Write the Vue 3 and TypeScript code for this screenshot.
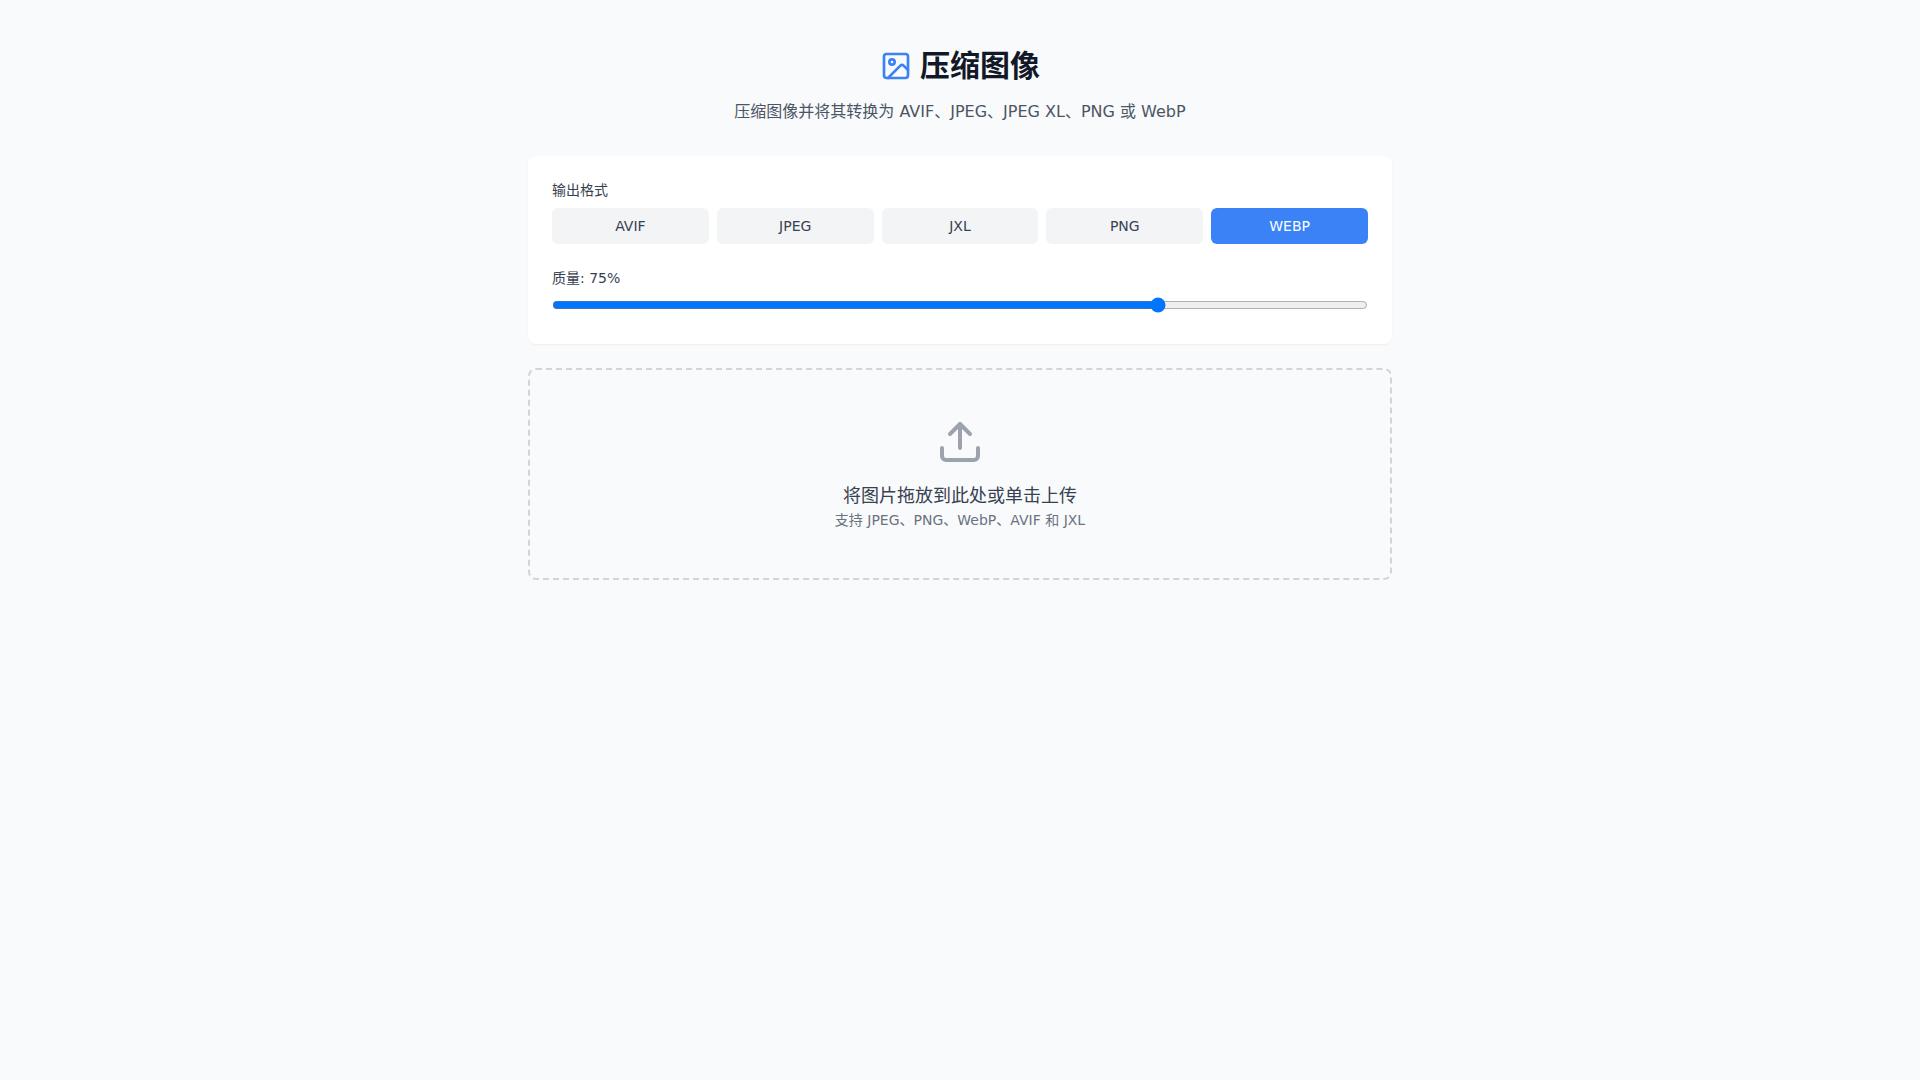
<script setup lang="ts">
import { ref } from 'vue'

const formats = ['avif', 'jpeg', 'jxl', 'png', 'webp']
const format = ref('webp')
const quality = ref(75)
</script>

<template>
  <div class="page">
    <main class="container">
      <header class="header">
        <div class="title-row">
          <svg class="logo" viewBox="0 0 24 24" aria-hidden="true">
            <rect width="18" height="18" x="3" y="3" rx="2" ry="2" />
            <circle cx="9" cy="9" r="2" />
            <path d="m21 15-3.086-3.086a2 2 0 0 0-2.828 0L6 21" />
          </svg>
          <h1>压缩图像</h1>
        </div>
        <p class="subtitle">压缩图像并将其转换为 AVIF、JPEG、JPEG XL、PNG 或 WebP</p>
      </header>

      <div class="stack">
        <section class="card">
          <div>
            <span id="format-label" class="label">输出格式</span>
            <div class="formats" role="group" aria-labelledby="format-label">
              <button
                v-for="item in formats"
                :key="item"
                type="button"
                :class="['format', { active: item === format }]"
                :aria-pressed="item === format"
                @click="format = item"
              >
                {{ item.toUpperCase() }}
              </button>
            </div>
          </div>
          <div>
            <label class="label" for="quality">质量: {{ quality }}%</label>
            <input id="quality" v-model.number="quality" class="slider" type="range" min="1" max="100" />
          </div>
        </section>

        <div class="dropzone">
          <input id="files" class="file-input" type="file" multiple accept="image/*,.jxl" />
          <label class="drop-label" for="files">
            <svg class="upload" viewBox="0 0 24 24" aria-hidden="true">
              <path d="M21 15v4a2 2 0 0 1-2 2H5a2 2 0 0 1-2-2v-4" />
              <polyline points="17 8 12 3 7 8" />
              <line x1="12" x2="12" y1="3" y2="15" />
            </svg>
            <span class="drop-title">将图片拖放到此处或单击上传</span>
            <span class="drop-hint">支持 JPEG、PNG、WebP、AVIF 和 JXL</span>
          </label>
        </div>
      </div>
    </main>
  </div>
</template>

<style>
body {
  margin: 0;
  background: #f9fafb;
}
</style>

<style scoped>
* {
  box-sizing: border-box;
}
.page {
  min-height: 100vh;
  background: #f9fafb;
  color: #111827;
  font-family: "DejaVu Sans", "Noto Sans CJK SC", sans-serif;
  font-size: 16px;
  line-height: 24px;
}
.container {
  max-width: 896px;
  margin: 0 auto;
  padding: 48px 16px;
}
.header {
  margin-bottom: 32px;
  text-align: center;
}
.title-row {
  display: flex;
  align-items: center;
  justify-content: center;
  gap: 8px;
  margin-bottom: 16px;
}
svg {
  display: block;
  fill: none;
  stroke: currentColor;
  stroke-width: 2;
  stroke-linecap: round;
  stroke-linejoin: round;
}
.logo {
  width: 32px;
  height: 32px;
  color: #3b82f6;
}
h1 {
  margin: 0;
  font-size: 30px;
  font-weight: 700;
  line-height: 36px;
}
.subtitle {
  margin: 0;
  color: #4b5563;
}
.stack {
  display: flex;
  flex-direction: column;
  gap: 24px;
}
.card {
  display: flex;
  flex-direction: column;
  gap: 24px;
  padding: 24px;
  border-radius: 8px;
  background: #fff;
  box-shadow: 0 1px 2px rgb(0 0 0 / 5%);
}
.label {
  display: block;
  margin-bottom: 8px;
  color: #374151;
  font-size: 14px;
  line-height: 20px;
}
.formats {
  display: grid;
  grid-template-columns: repeat(5, minmax(0, 1fr));
  gap: 8px;
}
.format {
  padding: 8px 16px;
  border: 0;
  border-radius: 6px;
  background: #f3f4f6;
  color: #374151;
  font-family: inherit;
  font-size: 14px;
  line-height: 20px;
  cursor: pointer;
}
.format.active {
  background: #3b82f6;
  color: #fff;
}
.slider {
  width: 100%;
  margin: 0;
}
.dropzone {
  position: relative;
  border: 2px dashed #d1d5db;
  border-radius: 8px;
}
.file-input {
  position: absolute;
  width: 1px;
  height: 1px;
  opacity: 0;
}
.drop-label {
  display: flex;
  flex-direction: column;
  align-items: center;
  padding: 48px 32px;
  cursor: pointer;
}
.upload {
  width: 48px;
  height: 48px;
  margin-bottom: 16px;
  color: #9ca3af;
}
.drop-title {
  color: #374151;
  font-size: 18px;
  line-height: 28px;
}
.drop-hint {
  color: #6b7280;
  font-size: 14px;
  line-height: 20px;
}
</style>
